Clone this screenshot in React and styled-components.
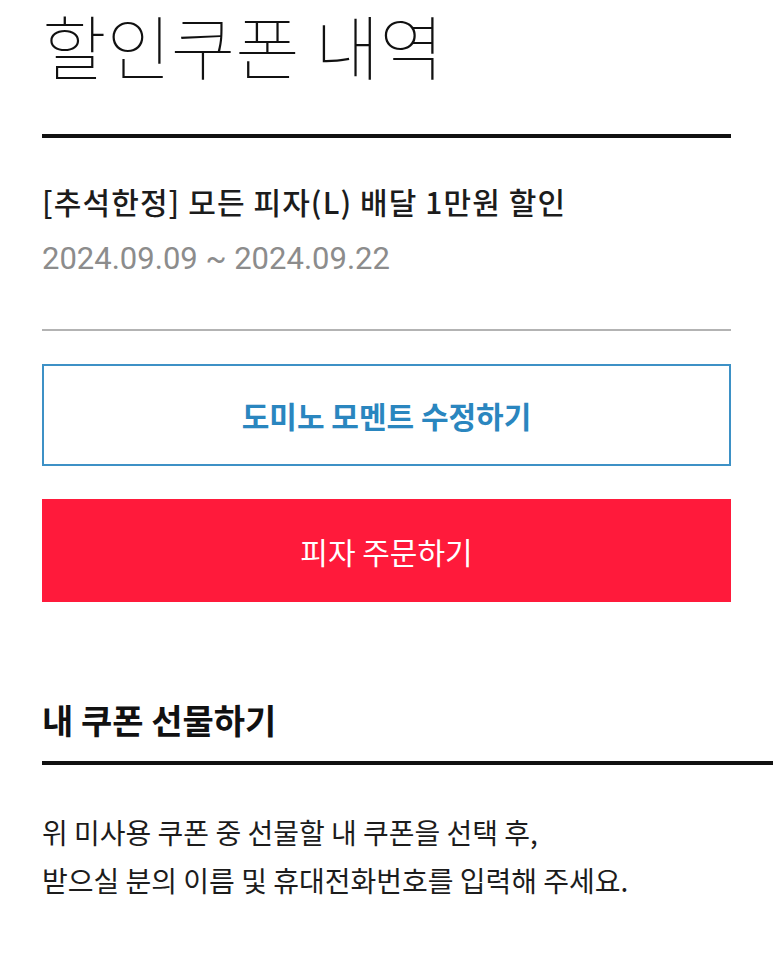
import React from "react";
import styled, { createGlobalStyle } from "styled-components";

const GlobalStyle = createGlobalStyle`
  html, body {
    margin: 0;
    padding: 0;
    background: #ffffff;
  }
  body {
    font-family: "Noto Sans CJK KR", "Noto Sans", sans-serif;
    color: #111111;
  }
  * {
    box-sizing: border-box;
  }
`;

const coupon = {
  title: "[추석한정] 모든 피자(L) 배달 1만원 할인",
  period: "2024.09.09 ~ 2024.09.22",
};

const App = () => {
  return (
    <>
      <GlobalStyle />
      <StPage>
        <StCouponSection>
          <StPageTitle>할인쿠폰 내역</StPageTitle>
          <StDivider />
          <StCouponItem>
            <StCouponName>{coupon.title}</StCouponName>
            <StCouponPeriod>{coupon.period}</StCouponPeriod>
          </StCouponItem>
          <StButtonGroup>
            <StButton type="button" variant="outline">
              도미노 모멘트 수정하기
            </StButton>
            <StButton type="button" variant="primary">
              피자 주문하기
            </StButton>
          </StButtonGroup>
        </StCouponSection>

        <StGiftSection>
          <StSectionTitle>내 쿠폰 선물하기</StSectionTitle>
          <StDivider />
          <StGuide>
            위 미사용 쿠폰 중 선물할 내 쿠폰을 선택 후,
            <br />
            받으실 분의 이름 및 휴대전화번호를 입력해 주세요.
          </StGuide>
        </StGiftSection>
      </StPage>
    </>
  );
};

export default App;

const StPage = styled.div`
  width: 773px;
  min-height: 972px;
  padding-left: 42px;
  display: flex;
  flex-direction: column;
`;

const StCouponSection = styled.section`
  margin-right: 42px;
  display: flex;
  flex-direction: column;
`;

const StPageTitle = styled.h1`
  margin: 0 0 47px 0;
  padding-top: 3px;
  font-size: 70px;
  line-height: 84px;
  font-weight: 100;
  color: #111111;
  letter-spacing: 0;
`;

const StDivider = styled.div`
  height: 4px;
  background-color: #111111;
`;

const StCouponItem = styled.div`
  margin-top: 44px;
  padding-bottom: 50px;
  border-bottom: 2px solid #b3b3b3;
  display: flex;
  flex-direction: column;
  gap: 19px;
`;

const StCouponName = styled.div`
  font-size: 30px;
  line-height: 38px;
  font-weight: 500;
  color: #1c1c1c;
  letter-spacing: 1.1px;
`;

const StCouponPeriod = styled.div`
  font-family: Roboto, "Noto Sans", sans-serif;
  font-size: 31px;
  line-height: 40px;
  color: #8c8c8c;
`;

const StButtonGroup = styled.div`
  margin-top: 33px;
  display: flex;
  flex-direction: column;
  gap: 33px;
`;

const StButton = styled.button`
  height: ${(props) => (props.variant === "outline" ? "102px" : "103px")};
  width: 100%;
  display: flex;
  align-items: center;
  justify-content: center;
  padding: 0;
  font-family: "Noto Sans CJK KR", "Noto Sans", sans-serif;
  font-size: 30px;
  cursor: pointer;
  border: ${(props) =>
    props.variant === "outline" ? "2px solid #3d91c6" : "0px"};
  background-color: ${(props) =>
    props.variant === "outline" ? "#ffffff" : "#ff1a3b"};
  color: ${(props) => (props.variant === "outline" ? "#2a86bf" : "#ffffff")};
  font-weight: ${(props) => (props.variant === "outline" ? 700 : 400)};
`;

const StGiftSection = styled.section`
  margin-top: 96px;
  display: flex;
  flex-direction: column;
`;

const StSectionTitle = styled.h2`
  margin: 0 0 19px 0;
  font-size: 34px;
  line-height: 44px;
  font-weight: 700;
  color: #111111;
`;

const StGuide = styled.p`
  margin: 43px 0 0 0;
  font-size: 28px;
  line-height: 48px;
  font-weight: 400;
  color: #1c1c1c;
`;
